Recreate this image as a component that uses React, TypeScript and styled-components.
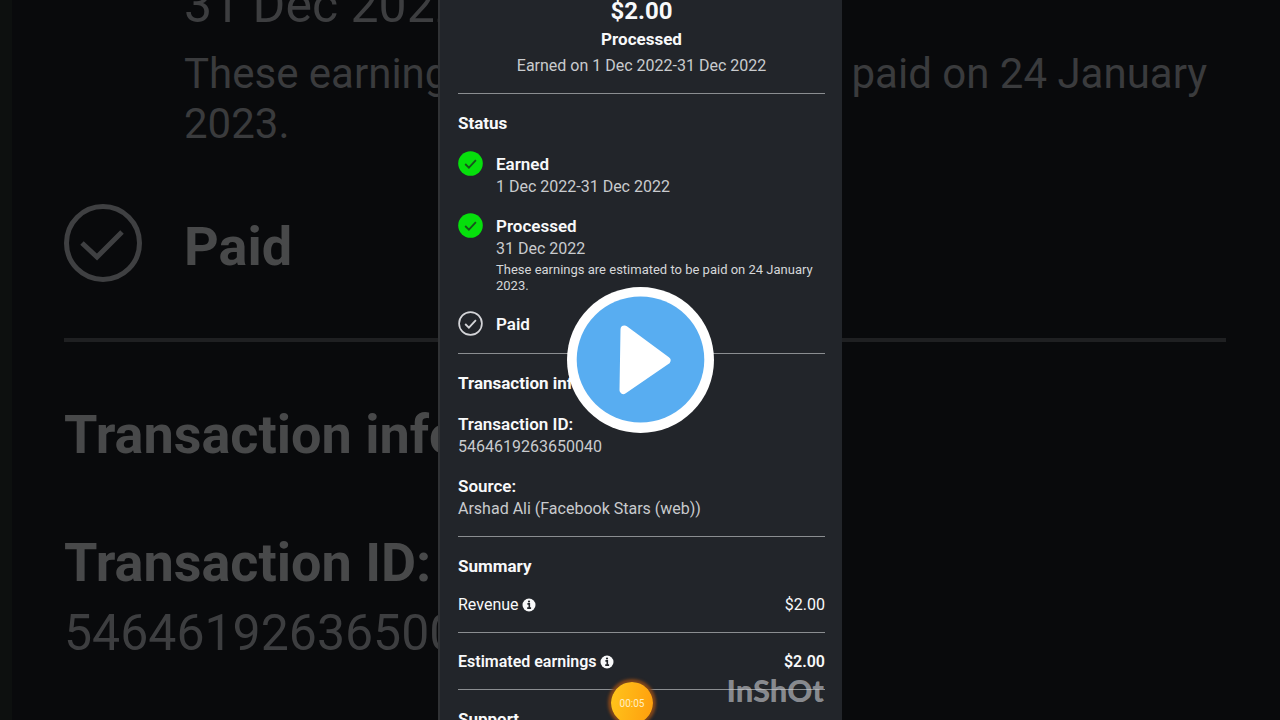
import React from "react";
import styled, { createGlobalStyle } from "styled-components";

const GlobalStyle = createGlobalStyle`
  * { box-sizing: border-box; }
  body { margin: 0; background: #090a0c; font-family: Roboto, "Liberation Sans", sans-serif; }
  h1, h2, h3, p, ul { margin: 0; padding: 0; font-weight: inherit; }
`;

const Stage = styled.main`
  position: relative;
  display: flex;
  justify-content: center;
  height: 100vh;
  overflow: hidden;
  background: #090a0c;
`;

/* Enlarged, dimmed copy of the video that fills the sides */
const Backdrop = styled.div`
  position: absolute;
  inset: 0;
  overflow: hidden;
  padding: 0 54px 0 64px;
  background: linear-gradient(90deg, #0d100f 12px, #090a0c 12px);
`;

const BackRow = styled.div`
  display: flex;
  align-items: flex-end;
  margin-top: 55px;
`;

const BackIconCell = styled.div`
  flex: 0 0 120px;
  display: flex;
`;

const BackText = styled.p<{ $strong?: boolean; $gap?: number }>`
  margin-top: ${(p) => p.$gap ?? 0}px;
  font-size: ${(p) => (p.$strong ? 54 : 50)}px;
  font-weight: ${(p) => (p.$strong ? 700 : 400)};
  color: ${(p) => (p.$strong ? "#48494a" : "#3d3e40")};
  line-height: 70px;
  white-space: nowrap;
`;

const BackStatus = styled.div`
  margin: -30px 0 0 120px;
`;

const BackNote = styled.p`
  margin-top: 9px;
  font-size: 42px;
  line-height: 50px;
  color: #3a3b3d;
`;

const BackRule = styled.div`
  height: 4px;
  margin: 56px 0 58px;
  background: #1f2022;
`;

const Screen = styled.section`
  position: relative;
  flex: 0 1 404px;
  padding: 0 17px 0 18px;
  border-left: 2px solid #303235;
  background: #22252a;
  color: #f8f9fa;
`;

const Header = styled.header`
  display: flex;
  flex-direction: column;
  align-items: center;
  text-align: center;
`;

const Amount = styled.h1`
  font-size: 24px;
  font-weight: 700;
  line-height: 22px;
`;

const Title = styled.h2`
  font-size: 17px;
  font-weight: 700;
  line-height: 22px;
`;

const HeaderTitle = styled(Title)`
  margin: 6px 0 4px;
`;

const Label = styled.h3`
  font-size: 17px;
  font-weight: 600;
  line-height: 22px;
`;

const Text = styled.p`
  margin-top: 1px;
  font-size: 16px;
  line-height: 22px;
  color: #c9cbce;
`;

const Note = styled.p`
  margin: 2px 0;
  font-size: 13px;
  line-height: 16px;
  color: #d5d7d9;
`;

const Rule = styled.hr`
  height: 1px;
  margin: 16px 0 18px;
  border: 0;
  background: #8b8e91;
`;

const StatusList = styled.ul`
  display: flex;
  flex-direction: column;
  gap: 17px;
  margin-top: 19px;
  padding-bottom: 2px;
  list-style: none;
`;

const StatusItem = styled.li`
  display: flex;
  gap: 12px;
`;

const StatusIcon = styled.svg`
  flex: 0 0 26px;
  height: 26px;
  margin: -2px 0;
`;

const FieldList = styled.div`
  display: flex;
  flex-direction: column;
  gap: 17px;
  margin-top: 19px;
`;

const SummaryRow = styled.div<{ $strong?: boolean }>`
  display: flex;
  align-items: center;
  justify-content: space-between;
  font-size: 16px;
  font-weight: ${(p) => (p.$strong ? 600 : 400)};
  line-height: 22px;
`;

const SummaryBlock = styled.div`
  margin-top: 17px;
`;

const SummaryName = styled.span`
  display: flex;
  align-items: center;
  gap: 3px;
`;

const PlayButton = styled.button`
  position: absolute;
  top: 50%;
  left: 50%;
  transform: translate(-50%, -50%);
  display: block;
  padding: 0;
  border: 0;
  border-radius: 50%;
  background: none;
  cursor: pointer;
  svg { display: block; }
`;

const Timer = styled.div`
  position: absolute;
  bottom: -4px;
  left: 50%;
  display: flex;
  align-items: center;
  justify-content: center;
  width: 42px;
  height: 42px;
  margin-left: -30px;
  border-radius: 50%;
  background: linear-gradient(100deg, #ffc51c, #ff9d0c);
  box-shadow: 0 0 3px 3px #80451a;
  color: #ffefc4;
  font-size: 10px;
`;

const Watermark = styled.div`
  position: absolute;
  right: 18px;
  bottom: 11px;
  color: rgba(205, 207, 212, 0.62);
  font-family: Lato, sans-serif;
  font-size: 31px;
  font-weight: 900;
  line-height: 38px;
`;

type IconProps = { done?: boolean };

const CheckIcon = ({ done }: IconProps) => (
  <StatusIcon viewBox="0 0 26 26" fill="none" aria-hidden="true">
    {done ? (
      <circle cx="12.5" cy="12.5" r="12.3" fill="#06df0c" />
    ) : (
      <circle cx="12.5" cy="12.5" r="11.4" stroke="#d4d5d8" strokeWidth="1.7" />
    )}
    <path d="M7.2 13l3.7 3.7 7-7.5" stroke={done ? "#17531d" : "#d4d5d8"} strokeWidth="1.8" />
  </StatusIcon>
);

const InfoIcon = () => (
  <svg width="14" height="14" viewBox="0 0 14 14" aria-hidden="true">
    <circle cx="7" cy="7" r="6.5" fill="#f8f9fa" />
    <path d="M5.4 5.9h1.9v4M5.2 10.1h3.9" stroke="#22252a" strokeWidth="1.6" fill="none" />
    <circle cx="7" cy="3.5" r="1.1" fill="#22252a" />
  </svg>
);

export default function App() {
  return (
    <>
      <GlobalStyle />
      <Stage>
        <Backdrop aria-hidden="true">
          <BackStatus>
            <BackText>31 Dec 2022</BackText>
            <BackNote>These earnings are estimated to be paid on 24 January 2023.</BackNote>
          </BackStatus>
          <BackRow>
            <BackIconCell>
              <svg width="78" height="78" viewBox="0 0 78 78" fill="none" stroke="#3f4042">
                <circle cx="39" cy="39" r="36.5" strokeWidth="5" />
                <path d="M18 39l15 14 25-25" strokeWidth="5" />
              </svg>
            </BackIconCell>
            <BackText $strong>Paid</BackText>
          </BackRow>
          <BackRule />
          <BackText $strong>Transaction info</BackText>
          <BackText $strong $gap={58}>Transaction ID:</BackText>
          <BackText>5464619263650040</BackText>
        </Backdrop>

        <Screen>
          <Header>
            <Amount>$2.00</Amount>
            <HeaderTitle>Processed</HeaderTitle>
            <Text>Earned on 1 Dec 2022-31 Dec 2022</Text>
          </Header>
          <Rule />

          <Title>Status</Title>
          <StatusList>
            <StatusItem>
              <CheckIcon done />
              <div>
                <Label>Earned</Label>
                <Text>1 Dec 2022-31 Dec 2022</Text>
              </div>
            </StatusItem>
            <StatusItem>
              <CheckIcon done />
              <div>
                <Label>Processed</Label>
                <Text>31 Dec 2022</Text>
                <Note>These earnings are estimated to be paid on 24 January 2023.</Note>
              </div>
            </StatusItem>
            <StatusItem>
              <CheckIcon />
              <Label>Paid</Label>
            </StatusItem>
          </StatusList>
          <Rule />

          <Title>Transaction info</Title>
          <FieldList>
            <div>
              <Label>Transaction ID:</Label>
              <Text>5464619263650040</Text>
            </div>
            <div>
              <Label>Source:</Label>
              <Text>Arshad Ali (Facebook Stars (web))</Text>
            </div>
          </FieldList>
          <Rule />

          <Title>Summary</Title>
          <SummaryBlock>
            <SummaryRow>
              <SummaryName>Revenue <InfoIcon /></SummaryName>
              <span>$2.00</span>
            </SummaryRow>
            <Rule />
            <SummaryRow $strong>
              <SummaryName>Estimated earnings <InfoIcon /></SummaryName>
              <span>$2.00</span>
            </SummaryRow>
            <Rule />
          </SummaryBlock>
          <Title>Support</Title>

          <Timer>00:05</Timer>
          <Watermark>InShOt</Watermark>
        </Screen>

        <PlayButton type="button" aria-label="Play video">
          <svg width="148" height="146" viewBox="0 0 148 146" aria-hidden="true">
            <ellipse cx="74.5" cy="73" rx="73.5" ry="73" fill="#fff" />
            <ellipse cx="74.5" cy="72.5" rx="63.8" ry="63" fill="#58adf1" />
            <path
              d="M58.500 42.500L100.500 73.500L57.500 103Z"
              fill="#fff"
              stroke="#fff"
              strokeWidth="8"
              strokeLinejoin="round"
            />
          </svg>
        </PlayButton>
      </Stage>
    </>
  );
}
